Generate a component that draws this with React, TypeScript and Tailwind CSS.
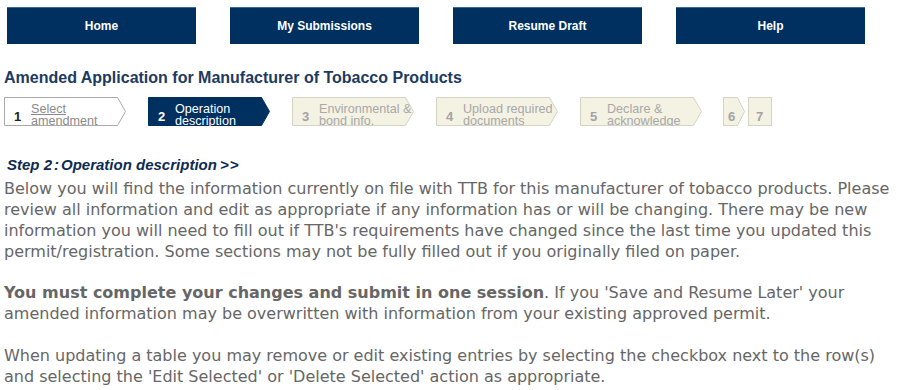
import React from "react"

const NAV = ["Home", "My Submissions", "Resume Draft", "Help"]

type StepKind = "done" | "active" | "todo"

const STEPS: { n: number; label: string[]; kind: StepKind }[] = [
  { n: 1, label: ["Select", "amendment"], kind: "done" },
  { n: 2, label: ["Operation", "description"], kind: "active" },
  { n: 3, label: ["Environmental &", "bond info."], kind: "todo" },
  { n: 4, label: ["Upload required", "documents"], kind: "todo" },
  { n: 5, label: ["Declare &", "acknowledge"], kind: "todo" },
]

function Chevron({ w, kind, tip = 8 }: { w: number; kind: StepKind; tip?: number }) {
  const fill = kind === "active" ? "#00305f" : kind === "done" ? "#ffffff" : "#f4f2e3"
  const stroke = kind === "active" ? "#00305f" : kind === "done" ? "#a9a9a9" : "#d5d3c4"
  const h = 29
  return (
    <svg className="absolute inset-0" width={w} height={h} viewBox={`0 0 ${w} ${h}`}>
      <polygon
        points={`0.5,0.5 ${w - tip - 0.5},0.5 ${w - 0.5},${h / 2} ${w - tip - 0.5},${h - 0.5} 0.5,${h - 0.5}`}
        fill={fill}
        stroke={stroke}
        strokeWidth={1}
      />
    </svg>
  )
}

function Step({ n, label, kind }: { n: number; label: string[]; kind: StepKind }) {
  const numColor = kind === "active" ? "text-white" : kind === "done" ? "text-[#222]" : "text-[#a3a3a3]"
  const txtColor =
    kind === "active" ? "text-white" : kind === "done" ? "text-[#8a8a8a] underline" : "text-[#a8a8a8]"
  return (
    <div className="relative w-[122px] h-[29px] overflow-hidden shrink-0">
      <Chevron w={122} kind={kind} />
      <div className="relative flex items-start h-full pl-[10px]">
        <span className={`text-[13px] font-bold mt-[13px] w-[17px] leading-[14px] ${numColor}`}>{n}</span>
        <div className={`text-[12.6px] leading-[12px] pt-[6px] ${txtColor}`}>
          {label.map((l) => (
            <div key={l} className="whitespace-nowrap">
              {l}
            </div>
          ))}
        </div>
      </div>
    </div>
  )
}

export default function App() {
  return (
    <div className="w-[904px] h-[390px] overflow-hidden bg-white font-['Liberation_Sans',Arial,sans-serif]">
      {/* top nav */}
      <div className="flex gap-[34px] pl-[7px] pt-[7px]">
        {NAV.map((n) => (
          <div
            key={n}
            className="w-[189px] h-[37px] bg-[#00305f] border-t border-[#3b6a92] flex items-center justify-center text-white text-[12px] font-bold"
          >
            {n}
          </div>
        ))}
      </div>

      <h1 className="mt-[25px] ml-[4px] text-[16px] leading-[18px] font-bold text-[#1d3a60]">
        Amended Application for Manufacturer of Tobacco Products
      </h1>

      {/* wizard steps */}
      <div className="flex items-start gap-[22px] ml-[4px] mt-[10px]">
        {STEPS.map((s) => (
          <Step key={s.n} {...s} />
        ))}
        <div className="flex gap-[3px] -ml-[1px]">
          <div className="relative w-[22px] h-[29px] shrink-0">
            <Chevron w={22} kind="todo" tip={7} />
            <span className="relative block text-[13px] font-bold text-[#a3a3a3] pl-[5px] pt-[13px] leading-[14px]">6</span>
          </div>
          <div className="w-[24px] h-[29px] bg-[#f4f2e3] border border-[#d5d3c4] text-[13px] font-bold text-[#a3a3a3] pl-[7px] pt-[12px] leading-[14px]">
            7
          </div>
        </div>
      </div>

      <div className="mt-[30px] ml-[7px] text-[15px] leading-[17px] font-bold italic text-[#0d2b52]">
        Step 2<span className="mx-[2px]">:</span>Operation description<span className="ml-[3px] tracking-[1px]">&gt;&gt;</span>
      </div>

      <div className="ml-[4px] mr-[4px] mt-[5px] text-[16px] leading-[21px] text-[#666666] font-['DejaVu_Sans',Verdana,sans-serif]">
        <p className="mb-[20px]">
          Below you will find the information currently on file with TTB for this manufacturer of tobacco products. Please
          review all information and edit as appropriate if any information has or will be changing. There may be new
          information you will need to fill out if TTB's requirements have changed since the last time you updated this
          permit/registration. Some sections may not be fully filled out if you originally filed on paper.
        </p>
        <p className="mb-[21px]">
          <span className="font-bold">You must complete your changes and submit in one session</span>. If you 'Save and
          Resume Later' your amended information may be overwritten with information from your existing approved permit.
        </p>
        <p>
          When updating a table you may remove or edit existing entries by selecting the checkbox next to the row(s) and
          selecting the 'Edit Selected' or 'Delete Selected' action as appropriate.
        </p>
      </div>
    </div>
  )
}
